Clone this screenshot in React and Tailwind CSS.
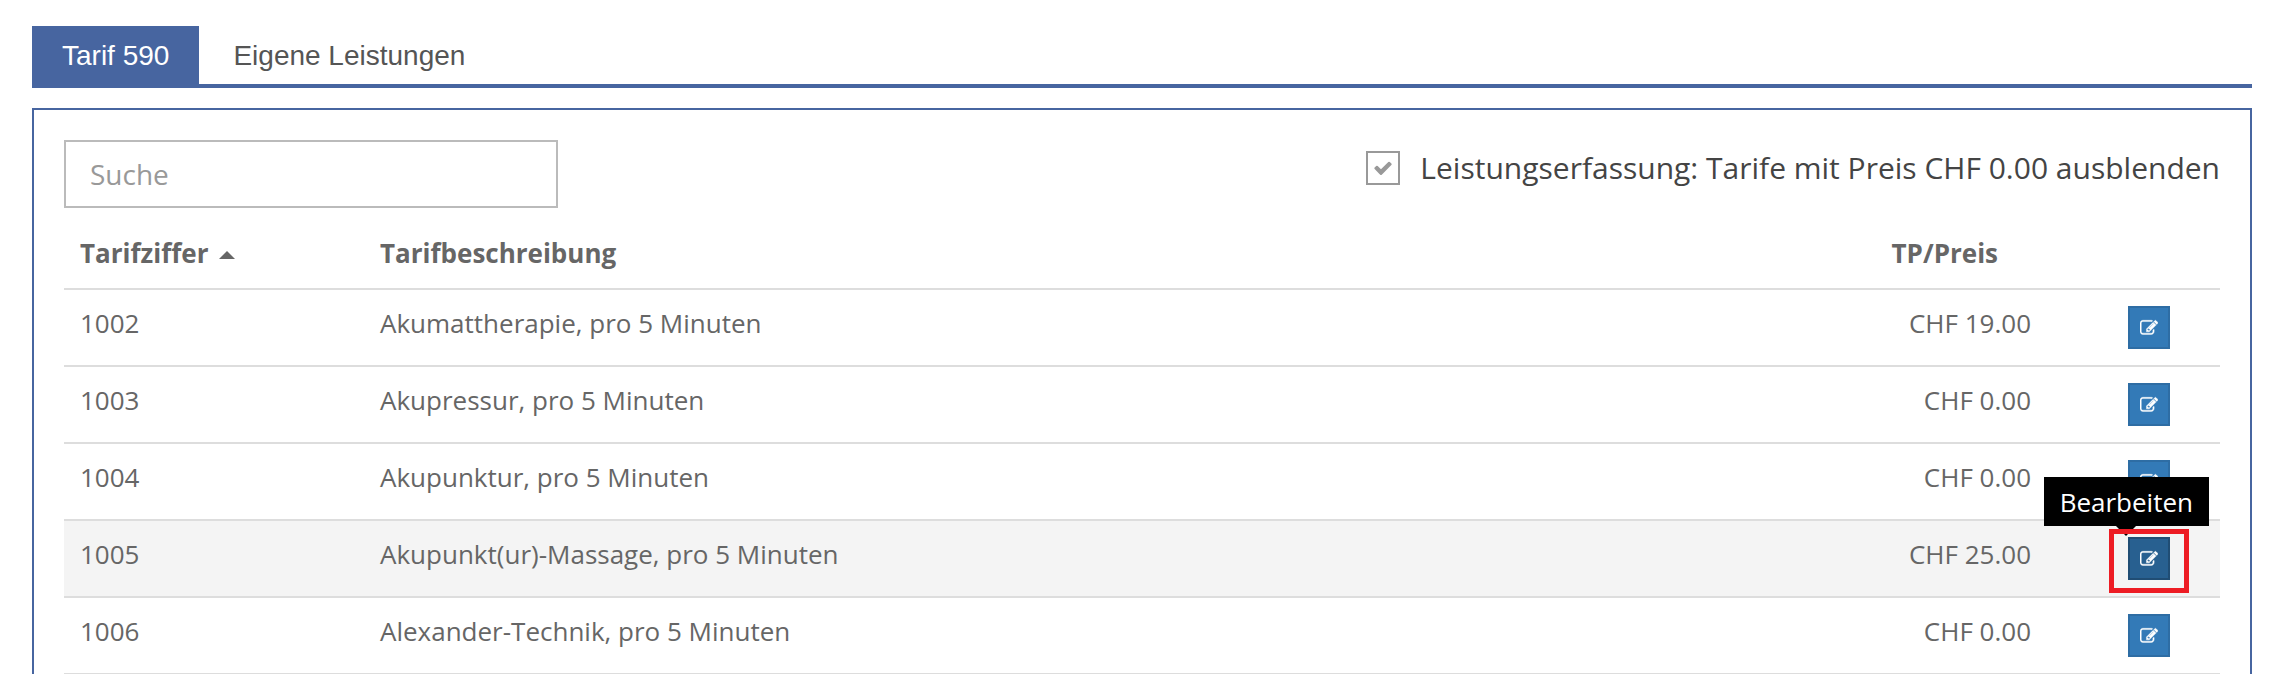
import React, { useState } from "react";

const tarife = [
  { ziffer: "1002", beschreibung: "Akumattherapie, pro 5 Minuten", preis: 19 },
  { ziffer: "1003", beschreibung: "Akupressur, pro 5 Minuten", preis: 0 },
  { ziffer: "1004", beschreibung: "Akupunktur, pro 5 Minuten", preis: 0 },
  {
    ziffer: "1005",
    beschreibung: "Akupunkt(ur)-Massage, pro 5 Minuten",
    preis: 25,
    active: true,
  },
  { ziffer: "1006", beschreibung: "Alexander-Technik, pro 5 Minuten", preis: 0 },
];

const EditIcon = () => (
  <svg
    viewBox="0 0 1792 1792"
    className="size-[18px] fill-current stroke-current"
    strokeWidth="40"
    aria-hidden="true"
  >
    <path d="M888 1184l116-116-152-152-116 116v56h96v96h56zm440-720q-16-16-33 1l-350 350q-17 17-1 33t33-1l350-350q17-17 1-33zm80 594v190q0 119-84.5 203.5t-203.5 84.5h-832q-119 0-203.5-84.5t-84.5-203.5v-832q0-119 84.5-203.5t203.5-84.5h832q63 0 117 25 15 7 18 23 3 17-9 29l-49 49q-14 14-32 8-23-6-45-6h-832q-66 0-113 47t-47 113v832q0 66 47 113t113 47h832q66 0 113-47t47-113v-126q0-13 9-22l64-64q15-15 35-7t20 29zm-96-738l288 288-672 672h-288v-288zm444 132l-92 92-288-288 92-92q28-28 68-28t68 28l152 152q28 28 28 68t-28 68z" />
  </svg>
);

const CheckIcon = () => (
  <svg
    viewBox="0 0 1792 1792"
    className="pointer-events-none col-start-1 row-start-1 hidden size-5 fill-[#999999] peer-checked:block"
    aria-hidden="true"
  >
    <path d="M1671 566q0 40-28 68l-724 724-136 136q-28 28-68 28t-68-28l-136-136-362-362q-28-28-28-68t28-68l136-136q28-28 68-28t68 28l294 295 656-657q28-28 68-28t68 28l136 136q28 28 28 68z" />
  </svg>
);

const EditButton = ({ active }) => (
  <div className="relative w-[42px]">
    <button
      aria-label="Bearbeiten"
      className={`flex h-[43px] w-[42px] items-center justify-center border-2 text-white ${
        active ? "border-[#204d74] bg-[#286090]" : "border-[#2e6da4] bg-[#337ab7]"
      }`}
    >
      <EditIcon />
    </button>
    {active && (
      <>
        <div
          role="tooltip"
          className="absolute right-[-39px] bottom-[54px] bg-black px-4 pt-[7px] pb-[5px] leading-[37px] text-white"
        >
          Bearbeiten
          <svg
            viewBox="0 0 20 10"
            className="absolute top-full left-1/2 -ml-[10px] h-[10px] w-5"
            aria-hidden="true"
          >
            <path d="M0 0h20l-10 10z" />
          </svg>
        </div>
        <div className="pointer-events-none absolute -inset-x-[19px] -top-2 -bottom-[13px] border-[5px] border-[#ed1c24]" />
      </>
    )}
  </div>
);

const TarifRow = ({ ziffer, beschreibung, preis, active }) => (
  <tr className={`h-[77px] border-y-2 border-[#dddddd] ${active ? "bg-[#f4f4f4]" : ""}`}>
    <td className="px-4 pb-2">{ziffer}</td>
    <td className="px-4 pb-2">{beschreibung}</td>
    <td className="px-4 pb-2 text-right">CHF {preis.toFixed(2)}</td>
    <td className="pl-[81px]">
      <EditButton active={active} />
    </td>
  </tr>
);

const App = () => {
  const [hideZero, setHideZero] = useState(true);
  const [search, setSearch] = useState("");

  return (
    <div className="h-screen overflow-hidden bg-white pt-[26px] pr-[27px] pl-8 font-['Open_Sans',sans-serif] text-[26px] text-[#666666]">
      <nav className="flex border-b-4 border-[#4765a0] font-['Liberation_Sans',Arial,sans-serif] text-[28px] leading-[56px]">
        <a href="#tarif" className="bg-[#4765a0] px-[30px] pt-[2px] text-white">
          Tarif 590
        </a>
        <a href="#eigene" className="px-[34px] pt-[2px] text-[#555555]">
          Eigene Leistungen
        </a>
      </nav>

      <main className="mt-5 border-2 border-b-0 border-[#4765a0] px-[30px] pt-[30px]">
        <div className="flex items-start justify-between">
          <input
            type="text"
            aria-label="Suche"
            placeholder="Suche"
            value={search}
            onChange={(e) => setSearch(e.target.value)}
            className="h-[68px] w-[494px] border-2 border-[#bbbbbb] px-6 text-[28px] placeholder:text-[#999999]"
          />
          <label className="flex items-center gap-5 pt-1 text-[30px] leading-[47px] text-[#444444]">
            <span className="grid size-[34px] place-items-center">
              <input
                type="checkbox"
                checked={hideZero}
                onChange={(e) => setHideZero(e.target.checked)}
                className="peer col-start-1 row-start-1 size-[34px] appearance-none border-2 border-[#999999]"
              />
              <CheckIcon />
            </span>
            Leistungserfassung: Tarife mit Preis CHF 0.00 ausblenden
          </label>
        </div>

        <table className="w-full table-fixed border-collapse">
          <colgroup>
            <col className="w-[300px]" />
            <col />
            <col className="w-[300px]" />
            <col className="w-[173px]" />
          </colgroup>
          <thead>
            <tr className="h-[81px] text-left">
              <th className="px-4 pt-[14px] pb-1">
                <span className="flex items-center gap-[11px]">
                  Tarifziffer
                  <svg viewBox="0 0 16 8" className="mt-1 h-2 w-4 fill-current" aria-hidden="true">
                    <path d="M0 8h16l-8-8z" />
                  </svg>
                </span>
              </th>
              <th className="px-4 pt-[14px] pb-1">Tarifbeschreibung</th>
              <th className="pt-[14px] pr-[49px] pb-1 text-right">TP/Preis</th>
              <th aria-label="Aktionen" />
            </tr>
          </thead>
          <tbody>
            {tarife.map((tarif) => (
              <TarifRow key={tarif.ziffer} {...tarif} />
            ))}
          </tbody>
        </table>
      </main>
    </div>
  );
};

export default App;
